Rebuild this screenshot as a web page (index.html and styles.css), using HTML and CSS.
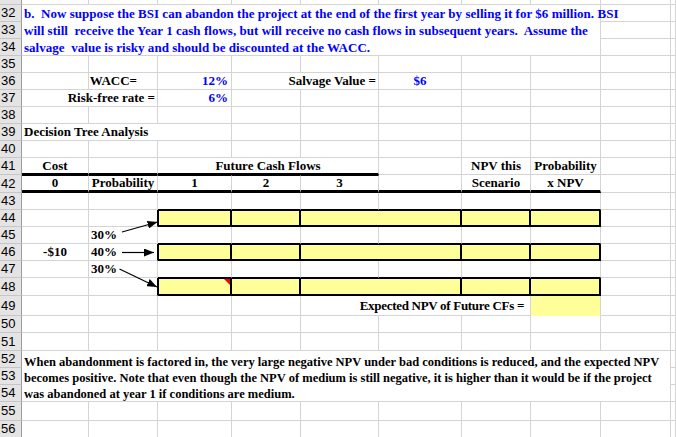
FILE: index.html
```html
<!DOCTYPE html>
<html>
<head>
<meta charset="utf-8">
<link rel="stylesheet" href="styles.css">
</head>
<body>
<div class="sheet">
  <!-- row 31 (partial) -->
  <div class="h"></div><div class="c"></div><div class="c"></div><div class="c"></div><div class="c"></div><div class="c"></div><div class="c"></div><div class="c"></div><div class="c"></div><div class="c"></div><div class="c"></div>
  <!-- 32 -->
  <div class="h">32</div>
  <div class="c merge-a-h blue">b.  Now suppose the BSI can abandon the project at the end of the first year by selling it for $6 million. BSI
will still  receive the Year 1 cash flows, but will receive no cash flows in subsequent years.  Assume the
salvage  value is risky and should be discounted at the WACC.</div>
  <div class="c"></div><div class="c"></div>
  <!-- 33 -->
  <div class="h">33</div><div class="c"></div><div class="c"></div>
  <!-- 34 -->
  <div class="h">34</div><div class="c"></div><div class="c"></div>
  <!-- 35 -->
  <div class="h">35</div><div class="c"></div><div class="c"></div><div class="c"></div><div class="c"></div><div class="c"></div><div class="c"></div><div class="c"></div><div class="c"></div><div class="c"></div><div class="c"></div>
  <!-- 36 -->
  <div class="h">36</div>
  <div class="c"></div>
  <div class="c right pad-wacc">WACC=</div>
  <div class="c right blue pad-r">12%</div>
  <div class="c span2 right">Salvage Value =</div>
  <div class="c center blue">$6</div>
  <div class="c"></div><div class="c"></div><div class="c"></div><div class="c"></div>
  <!-- 37 -->
  <div class="h">37</div>
  <div class="c span2 right">Risk-free rate =</div>
  <div class="c right blue pad-r">6%</div>
  <div class="c"></div><div class="c"></div><div class="c"></div><div class="c"></div><div class="c"></div><div class="c"></div><div class="c"></div>
  <!-- 38 -->
  <div class="h">38</div><div class="c"></div><div class="c"></div><div class="c"></div><div class="c"></div><div class="c"></div><div class="c"></div><div class="c"></div><div class="c"></div><div class="c"></div><div class="c"></div>
  <!-- 39 -->
  <div class="h">39</div>
  <div class="c span3">Decision Tree Analysis</div>
  <div class="c"></div><div class="c"></div><div class="c"></div><div class="c"></div><div class="c"></div><div class="c"></div><div class="c"></div>
  <!-- 40 -->
  <div class="h">40</div><div class="c"></div><div class="c"></div><div class="c"></div><div class="c"></div><div class="c"></div><div class="c"></div><div class="c"></div><div class="c"></div><div class="c"></div><div class="c"></div>
  <!-- 41 -->
  <div class="h">41</div>
  <div class="c center rule-below">Cost</div>
  <div class="c rule-below"></div>
  <div class="c span3 center rule-below">Future Cash Flows</div>
  <div class="c"></div>
  <div class="c center">NPV this</div>
  <div class="c center">Probability</div>
  <div class="c"></div><div class="c"></div>
  <!-- 42 -->
  <div class="h">42</div>
  <div class="c center head top-rule">0</div>
  <div class="c center head top-rule">Probability</div>
  <div class="c center head top-rule">1</div>
  <div class="c center head top-rule">2</div>
  <div class="c center head top-rule">3</div>
  <div class="c head"></div>
  <div class="c center head">Scenario</div>
  <div class="c center head">x NPV</div>
  <div class="c"></div><div class="c"></div>
  <!-- 43 -->
  <div class="h">43</div><div class="c"></div><div class="c"></div>
  <div class="c above-box"></div><div class="c above-box"></div><div class="c above-box"></div><div class="c above-box"></div><div class="c above-box"></div><div class="c above-box"></div>
  <div class="c"></div><div class="c"></div>
  <!-- 44 -->
  <div class="h">44</div><div class="c"></div><div class="c left-of-box"></div>
  <div class="c box box-first"></div><div class="c box"></div><div class="c box span2"></div><div class="c box"></div><div class="c box"></div>
  <div class="c"></div><div class="c"></div>
  <!-- 45 -->
  <div class="h">45</div><div class="c"></div><div class="c">30%</div>
  <div class="c above-box"></div><div class="c above-box"></div><div class="c above-box"></div><div class="c above-box"></div><div class="c above-box"></div><div class="c above-box"></div>
  <div class="c"></div><div class="c"></div>
  <!-- 46 -->
  <div class="h">46</div><div class="c center">-$10</div><div class="c left-of-box">40%</div>
  <div class="c box box-first"></div><div class="c box"></div><div class="c box span2"></div><div class="c box"></div><div class="c box"></div>
  <div class="c"></div><div class="c"></div>
  <!-- 47 -->
  <div class="h">47</div><div class="c"></div><div class="c">30%</div>
  <div class="c above-box"></div><div class="c above-box"></div><div class="c above-box"></div><div class="c above-box"></div><div class="c above-box"></div><div class="c above-box"></div>
  <div class="c"></div><div class="c"></div>
  <!-- 48 -->
  <div class="h">48</div><div class="c"></div><div class="c left-of-box"></div>
  <div class="c box box-first comment"></div><div class="c box"></div><div class="c box span2"></div><div class="c box"></div><div class="c box"></div>
  <div class="c"></div><div class="c"></div>
  <!-- 49 -->
  <div class="h">49</div><div class="c"></div><div class="c"></div><div class="c"></div><div class="c"></div>
  <div class="c span3 right pad-exp tight">Expected NPV of Future CFs =</div>
  <div class="c fill"></div>
  <div class="c"></div><div class="c"></div>
  <!-- 50 -->
  <div class="h">50</div><div class="c"></div><div class="c"></div><div class="c"></div><div class="c"></div><div class="c"></div><div class="c"></div><div class="c"></div><div class="c"></div><div class="c"></div><div class="c"></div>
  <!-- 51 -->
  <div class="h">51</div><div class="c"></div><div class="c"></div><div class="c"></div><div class="c"></div><div class="c"></div><div class="c"></div><div class="c"></div><div class="c"></div><div class="c"></div><div class="c"></div>
  <!-- 52 -->
  <div class="h">52</div>
  <div class="c merge-a-i">When abandonment is factored in, the very large negative NPV under bad conditions is reduced, and the expected NPV
becomes positive. Note that even though the NPV of medium is still negative, it is higher than it would be if the project
was abandoned at year 1 if conditions are medium.</div>
  <div class="c"></div>
  <!-- 53 -->
  <div class="h">53</div><div class="c"></div>
  <!-- 54 -->
  <div class="h">54</div><div class="c"></div>
  <!-- 55 -->
  <div class="h">55</div><div class="c"></div><div class="c"></div><div class="c"></div><div class="c"></div><div class="c"></div><div class="c"></div><div class="c"></div><div class="c"></div><div class="c"></div><div class="c"></div>
  <!-- 56 -->
  <div class="h">56</div><div class="c"></div><div class="c"></div><div class="c"></div><div class="c"></div><div class="c"></div><div class="c"></div><div class="c"></div><div class="c"></div><div class="c"></div><div class="c"></div>
</div>

<svg class="arrows" width="676" height="437" viewBox="0 0 676 437">
  <defs>
    <marker id="ah" viewBox="0 0 10 8" refX="10" refY="4" markerWidth="10" markerHeight="8" markerUnits="userSpaceOnUse" orient="auto">
      <path d="M0,0 L10,4 L0,8 z" fill="#000"/>
    </marker>
  </defs>
  <line x1="122" y1="232" x2="157.5" y2="222" stroke="#000" stroke-width="1.2" marker-end="url(#ah)"/>
  <line x1="122" y1="252.5" x2="154" y2="252.5" stroke="#000" stroke-width="1.2" marker-end="url(#ah)"/>
  <line x1="119.5" y1="269" x2="157" y2="287" stroke="#000" stroke-width="1.2" marker-end="url(#ah)"/>
</svg>
</body>
</html>
```
FILE: styles.css
```css
html, body {
  margin: 0;
  padding: 0;
  background: #fff;
}
body {
  width: 676px;
  height: 437px;
  overflow: hidden;
  position: relative;
  font-family: "Liberation Serif", "Times New Roman", serif;
  font-weight: bold;
  font-size: 13px;
  color: #000;
}
.sheet {
  display: grid;
  grid-template-columns: 22px 67px 69px 74px 69px 78px 83px 69px 70px 70px 5px;
  grid-template-rows:
    5px
    17px 17px 17px 17px 17px 17px 17px 17px 17px 17px
    18px
    17px 17px 17px 17px 17px
    18px 20px 17px 18px
    17px 17px 17px
    19px 17px;
}
.c {
  box-sizing: border-box;
  border-right: 1px solid #d4d4d4;
  border-bottom: 1px solid #d4d4d4;
  display: flex;
  align-items: center;
  white-space: pre;
  line-height: 16px;
  padding: 0 2px;
  min-width: 0;
  position: relative;
}
.h {
  box-sizing: border-box;
  background: #e4e4e4;
  border-right: 1px solid #9c9c9c;
  border-bottom: 1px solid #c6c6c6;
  font-family: "Liberation Sans", Arial, sans-serif;
  font-weight: normal;
  font-size: 13px;
  line-height: 16px;
  color: #000;
  padding-left: 1px;
  display: flex;
  align-items: center;
  overflow: hidden;
}
.blue { color: #0000ff; }
.right { justify-content: flex-end; }
.center { justify-content: center; }
.pad-r { padding-right: 3px; }
.pad-wacc { padding-right: 20px; }
.pad-exp { padding-right: 6px; }
.tight { letter-spacing: -0.3px; }
.span2 { grid-column: span 2; }
.span3 { grid-column: span 3; }

.merge-a-h {
  grid-column: span 8;
  grid-row: span 3;
  display: block;
  line-height: 17px;
  letter-spacing: 0.03px;
}
.merge-a-i {
  grid-column: span 9;
  grid-row: span 3;
  display: block;
  font-size: 12.5px;
  line-height: 16px;
  padding-top: 3px;
}

/* thick rules around the column-title row */
.rule-below { border-bottom: 2px solid #000; }
.top-rule { border-top: 1px solid #000; }
.head {
  border-bottom: 3px solid #000;
  line-height: 14px;
}

/* yellow scenario boxes */
.above-box { border-bottom-color: #000; }
.left-of-box { border-right-color: #000; }
.box {
  background: #ffff99;
  border-top: 1px solid #000;
  border-right: 2px solid #000;
  border-bottom: 2px solid #000;
}
.box-first { border-left: 1px solid #000; }
.fill {
  background: #ffff99;
  border-bottom-color: #ffff99;
}
.comment::after {
  content: "";
  position: absolute;
  top: 0;
  right: 0;
  width: 0;
  height: 0;
  border-top: 6px solid #ff0000;
  border-left: 6px solid transparent;
}

.arrows {
  position: absolute;
  left: 0;
  top: 0;
  pointer-events: none;
}
```
